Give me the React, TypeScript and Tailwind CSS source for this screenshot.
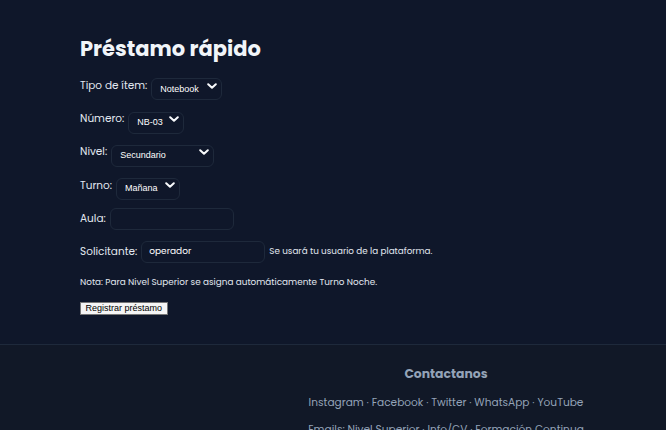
import type { ReactNode } from 'react'

const font = { fontFamily: '"Poppins", "DejaVu Sans", sans-serif' }

function Chevron() {
  return (
    <svg className="pointer-events-none absolute right-[5px] top-1/2 -translate-y-1/2" width="10" height="6" viewBox="0 0 10 6" fill="none">
      <path d="M1.2 1.2L5 4.8L8.8 1.2" stroke="#f8fafc" strokeWidth="2" strokeLinecap="round" strokeLinejoin="round" />
    </svg>
  )
}

function Select({ value, width }: { value: string; width: string }) {
  return (
    <div className={`relative h-[22px] ${width}`}>
      <select
        defaultValue={value}
        className="h-full w-full appearance-none rounded-md border border-[#1e293b] bg-[#0f172a] pl-[8px] text-[9px] text-white outline-none"
        style={{ fontFamily: '"Liberation Sans", Arial, sans-serif' }}
      >
        <option>{value}</option>
      </select>
      <Chevron />
    </div>
  )
}

function Row({ label, children }: { label: string; children: ReactNode }) {
  return (
    <div className="flex h-[22px] items-center gap-[4px]">
      <span className="text-[10.5px] text-[#e2e8f0]">{label}</span>
      {children}
    </div>
  )
}

export default function App() {
  return (
    <div className="min-h-[430px] w-[666px] overflow-hidden bg-[#0f172a]" style={font}>
      <main className="px-[80px] pb-[26px] pt-[34px]">
        <h1 className="text-[21px] font-bold leading-[30px] text-[#f1f5f9]">Préstamo rápido</h1>
        <div className="mt-[10.5px] flex flex-col gap-[11.3px]">
          <Row label="Tipo de ítem:">
            <Select value="Notebook" width="w-[71px]" />
          </Row>
          <Row label="Número:">
            <Select value="NB-03" width="w-[56px]" />
          </Row>
          <Row label="Nivel:">
            <Select value="Secundario" width="w-[103px]" />
          </Row>
          <Row label="Turno:">
            <Select value="Mañana" width="w-[64px]" />
          </Row>
          <Row label="Aula:">
            <input className="h-[22px] w-[124px] rounded-md border border-[#1e293b] bg-[#0f172a] px-[7px] text-[9px] text-white outline-none" />
          </Row>
          <Row label="Solicitante:">
            <input
              defaultValue="operador"
              className="h-[22px] w-[124px] rounded-md border border-[#1e293b] bg-[#0f172a] px-[7px] text-[9px] text-white outline-none"
            />
            <span className="text-[8.8px] text-[#e2e8f0]">Se usará tu usuario de la plataforma.</span>
          </Row>
        </div>
        <p className="mt-[13.5px] text-[8.85px] leading-[12px] text-[#e2e8f0]">
          Nota: Para Nivel Superior se asigna automáticamente Turno Noche.
        </p>
        <button
          className="mt-[14px] h-[13px] border border-[#767676] bg-[#f5f5f5] px-[4.5px] text-[9px] leading-[11px] text-black"
          style={{ fontFamily: '"Liberation Sans", Arial, sans-serif' }}
        >
          Registrar préstamo
        </button>
      </main>
      <footer className="border-t border-[#1e293b] bg-[#111827] pt-[20px]">
        <div className="grid grid-cols-[226px_1fr]">
          <div />
          <div className="flex flex-col items-center text-[#94a3b8]">
            <h3 className="text-[12.4px] font-bold leading-[18px]">Contactanos</h3>
            <p className="mt-[12px] text-[10.6px] leading-[16px]">
              Instagram · Facebook · Twitter · WhatsApp · YouTube
            </p>
            <p className="mt-[11px] text-[10.6px] leading-[16px]">
              Emails: Nivel Superior · Info/CV · Formación Continua
            </p>
          </div>
        </div>
      </footer>
    </div>
  )
}
